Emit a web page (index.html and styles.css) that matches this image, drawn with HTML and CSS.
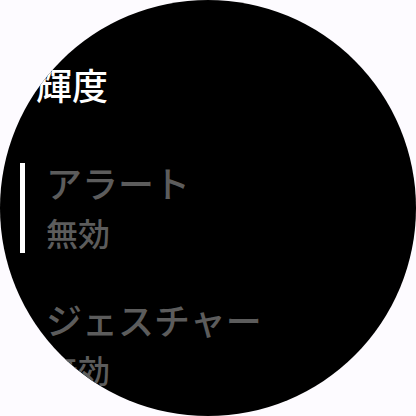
FILE: index.html
```html
<!DOCTYPE html>
<html lang="ja">
<head>
<meta charset="utf-8">
<link rel="stylesheet" href="styles.css">
</head>
<body>
<div class="watch">
  <div class="title">輝度</div>
  <div class="list">
    <div class="item selected">
      <div class="bar"></div>
      <div class="texts">
        <div class="primary">アラート</div>
        <div class="secondary">無効</div>
      </div>
    </div>
    <div class="item">
      <div class="bar"></div>
      <div class="texts">
        <div class="primary">ジェスチャー</div>
        <div class="secondary">無効</div>
      </div>
    </div>
  </div>
</div>
</body>
</html>
```
FILE: styles.css
```css
html, body {
  margin: 0;
  padding: 0;
  background: #fdfbff;
}
body {
  width: 416px;
  height: 416px;
  overflow: hidden;
  font-family: "Noto Sans CJK JP", "Noto Sans", sans-serif;
}
.watch {
  width: 416px;
  height: 416px;
  border-radius: 50%;
  background: #000;
  overflow: hidden;
  box-sizing: border-box;
  padding-top: 66px;
}
.title {
  color: #fff;
  font-size: 36px;
  line-height: 36px;
  font-weight: 500;
  margin-left: 36px;
}
.list {
  margin-top: 61px;
  display: flex;
  flex-direction: column;
  gap: 47px;
}
.item {
  display: flex;
  height: 90px;
  padding-left: 20px;
}
.bar {
  width: 5px;
  height: 90px;
  background: transparent;
}
.selected .bar {
  background: #fff;
}
.texts {
  margin-left: 21px;
  padding-top: 1px;
  display: flex;
  flex-direction: column;
  gap: 16px;
}
.primary {
  color: #5c5c5c;
  font-size: 36px;
  line-height: 36px;
  font-weight: 500;
  white-space: nowrap;
}
.secondary {
  color: #5c5c5c;
  font-size: 32px;
  line-height: 32px;
  font-weight: 500;
  white-space: nowrap;
}
```
